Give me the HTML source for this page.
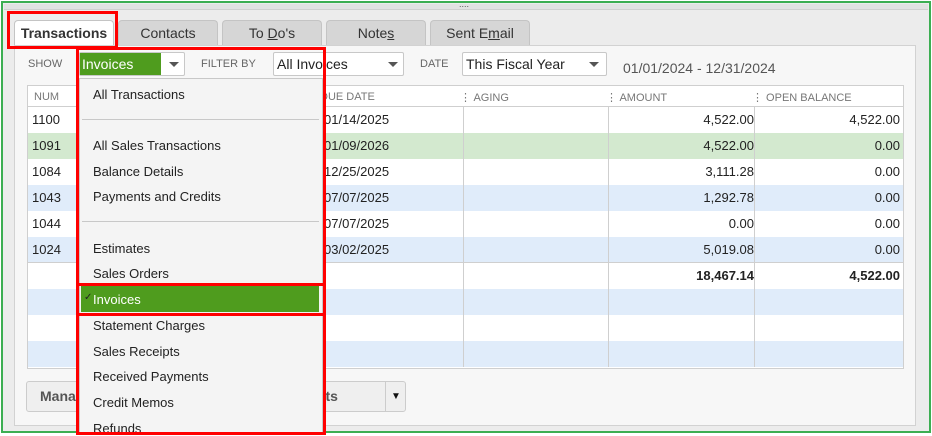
<!DOCTYPE html>
<html><head><style>
*{margin:0;padding:0;box-sizing:border-box}
body{width:932px;height:435px;overflow:hidden;background:#fff;font-family:"Liberation Sans",Arial,sans-serif;font-size:13px;color:#222;position:relative}
.a{position:absolute}
.tab{position:absolute;top:20px;height:25px;width:100px;background:#d6d6d6;border:1px solid #c4c4c4;border-bottom:none;border-radius:4px 4px 0 0;text-align:center;line-height:24px;font-size:14px;color:#333}
.lbl{position:absolute;font-size:11px;color:#666;top:58px}
.dd{position:absolute;top:52px;height:24px;background:#fff;border:1px solid #c8c8c8;border-radius:2px;font-size:14px;line-height:22px;padding-left:3px}
.tri{position:absolute;width:0;height:0;border-left:5px solid transparent;border-right:5px solid transparent;border-top:5px solid #555}
.row{position:absolute;left:28px;width:875px;height:26px;line-height:26px;font-size:13px}
.hd{position:absolute;top:91px;font-size:11px;color:#777}
.num{position:absolute;width:140px;text-align:right}
.mi{position:absolute;left:93px;font-size:13px;color:#222}
.vl{position:absolute;top:107px;width:1px;height:260px;background:#cfcfcf}
</style></head><body>
<div class="a" style="left:1px;top:1px;width:930px;height:432px;border:2px solid #3cae52;background:#ececec"></div>
<div class="a" style="left:4px;top:4px;width:924px;height:6px;background:#e2e2e2;border-bottom:1px solid #d0d0d0"></div>
<div class="a" style="left:459px;top:1px;font-size:9px;color:#555;line-height:6px">....</div>
<div class="a" style="left:14px;top:45px;width:902px;height:381px;background:#f7f7f7;border:1px solid #d2d2d2"></div>
<div class="tab" style="left:14px;background:#fff;font-weight:bold;color:#333">Transactions</div>
<div class="tab" style="left:118px">Contacts</div>
<div class="tab" style="left:222px">To <u>D</u>o's</div>
<div class="tab" style="left:326px">Note<u>s</u></div>
<div class="tab" style="left:430px">Sent E<u>m</u>ail</div>
<div class="a" style="left:7px;top:11px;width:111px;height:38px;border:3px solid #f00"></div>
<div class="lbl" style="left:28px">SHOW</div>
<div class="dd" style="left:79px;width:106px;padding:0"><div class="a" style="left:0;top:0;width:81px;height:22px;background:#4f9c1e;color:#fff;padding-left:2px">Invoices</div><div class="tri" style="left:89px;top:9px"></div></div>
<div class="lbl" style="left:201px">FILTER BY</div>
<div class="dd" style="left:273px;width:131px">All Invoices<div class="tri" style="left:114px;top:9px"></div></div>
<div class="lbl" style="left:420px">DATE</div>
<div class="dd" style="left:462px;width:145px">This Fiscal Year<div class="tri" style="left:126px;top:9px"></div></div>
<div class="a" style="left:623px;top:60px;font-size:14px;color:#555">01/01/2024 - 12/31/2024</div>
<div class="a" style="left:27px;top:85px;width:877px;height:284px;background:#fff;border:1px solid #cfcfcf"></div>
<div class="a" style="left:28px;top:106px;width:875px;height:1px;background:#cfcfcf"></div>
<div class="hd" style="left:34px">NUM</div>
<div class="hd" style="left:320px">DUE DATE</div>
<div class="hd" style="left:460px">⋮ AGING</div>
<div class="hd" style="left:606px">⋮ AMOUNT</div>
<div class="hd" style="left:752px">⋮ OPEN BALANCE</div>
<div class="row" style="top:107px"><span class="a" style="left:4px">1100</span><span class="a" style="left:296px">01/14/2025</span><span class="num" style="left:586px">4,522.00</span><span class="num" style="left:732px">4,522.00</span></div>
<div class="row" style="top:133px;background:#d3e9cf"><span class="a" style="left:4px">1091</span><span class="a" style="left:296px">01/09/2026</span><span class="num" style="left:586px">4,522.00</span><span class="num" style="left:732px">0.00</span></div>
<div class="row" style="top:159px"><span class="a" style="left:4px">1084</span><span class="a" style="left:296px">12/25/2025</span><span class="num" style="left:586px">3,111.28</span><span class="num" style="left:732px">0.00</span></div>
<div class="row" style="top:185px;background:#e0ecfa"><span class="a" style="left:4px">1043</span><span class="a" style="left:296px">07/07/2025</span><span class="num" style="left:586px">1,292.78</span><span class="num" style="left:732px">0.00</span></div>
<div class="row" style="top:211px"><span class="a" style="left:4px">1044</span><span class="a" style="left:296px">07/07/2025</span><span class="num" style="left:586px">0.00</span><span class="num" style="left:732px">0.00</span></div>
<div class="row" style="top:237px;background:#e0ecfa;border-bottom:1px solid #cfcfcf"><span class="a" style="left:4px">1024</span><span class="a" style="left:296px">03/02/2025</span><span class="num" style="left:586px">5,019.08</span><span class="num" style="left:732px">0.00</span></div>
<div class="row" style="top:263px;font-weight:bold"><span class="num" style="left:586px">18,467.14</span><span class="num" style="left:732px">4,522.00</span></div>
<div class="row" style="top:289px;background:#e0ecfa"></div>
<div class="row" style="top:341px;background:#e0ecfa"></div>
<div class="vl" style="left:463px"></div><div class="vl" style="left:608px"></div><div class="vl" style="left:754px"></div>
<div class="a" style="left:26px;top:381px;width:380px;height:31px;background:#efefef;border:1px solid #ccc;border-radius:3px;font-weight:bold;color:#555;font-size:14px;line-height:29px;padding-left:13px">Mana<span class="a" style="left:293px">rts</span><span class="a" style="left:358px;top:0;width:1px;height:29px;background:#ccc"></span><span class="a" style="left:364px;font-size:10px;color:#111">▼</span></div>
<div class="a" style="left:79px;top:78px;width:244px;height:357px;background:#f4f4f4;border:1px solid #c8c8c8"></div>
<div class="a" style="left:82px;top:119px;width:237px;height:1px;background:#c8c8c8"></div>
<div class="a" style="left:82px;top:221px;width:237px;height:1px;background:#c8c8c8"></div>
<div class="mi" style="top:87px">All Transactions</div>
<div class="mi" style="top:138px">All Sales Transactions</div>
<div class="mi" style="top:164px">Balance Details</div>
<div class="mi" style="top:189px">Payments and Credits</div>
<div class="mi" style="top:241px">Estimates</div>
<div class="mi" style="top:266px">Sales Orders</div>
<div class="a" style="left:81px;top:286px;width:238px;height:26px;background:#4f9c1e"></div>
<div class="a" style="left:84px;top:292px;font-size:10px;color:#222">✓</div>
<div class="mi" style="top:292px;color:#fff">Invoices</div>
<div class="mi" style="top:318px">Statement Charges</div>
<div class="mi" style="top:344px">Sales Receipts</div>
<div class="mi" style="top:369px">Received Payments</div>
<div class="mi" style="top:395px">Credit Memos</div>
<div class="mi" style="top:421px">Refunds</div>
<div class="a" style="left:76px;top:47px;width:250px;height:239px;border:3px solid #f00"></div>
<div class="a" style="left:76px;top:283px;width:250px;height:33px;border:3px solid #f00"></div>
<div class="a" style="left:76px;top:313px;width:250px;height:122px;border:3px solid #f00"></div>
</body></html>
